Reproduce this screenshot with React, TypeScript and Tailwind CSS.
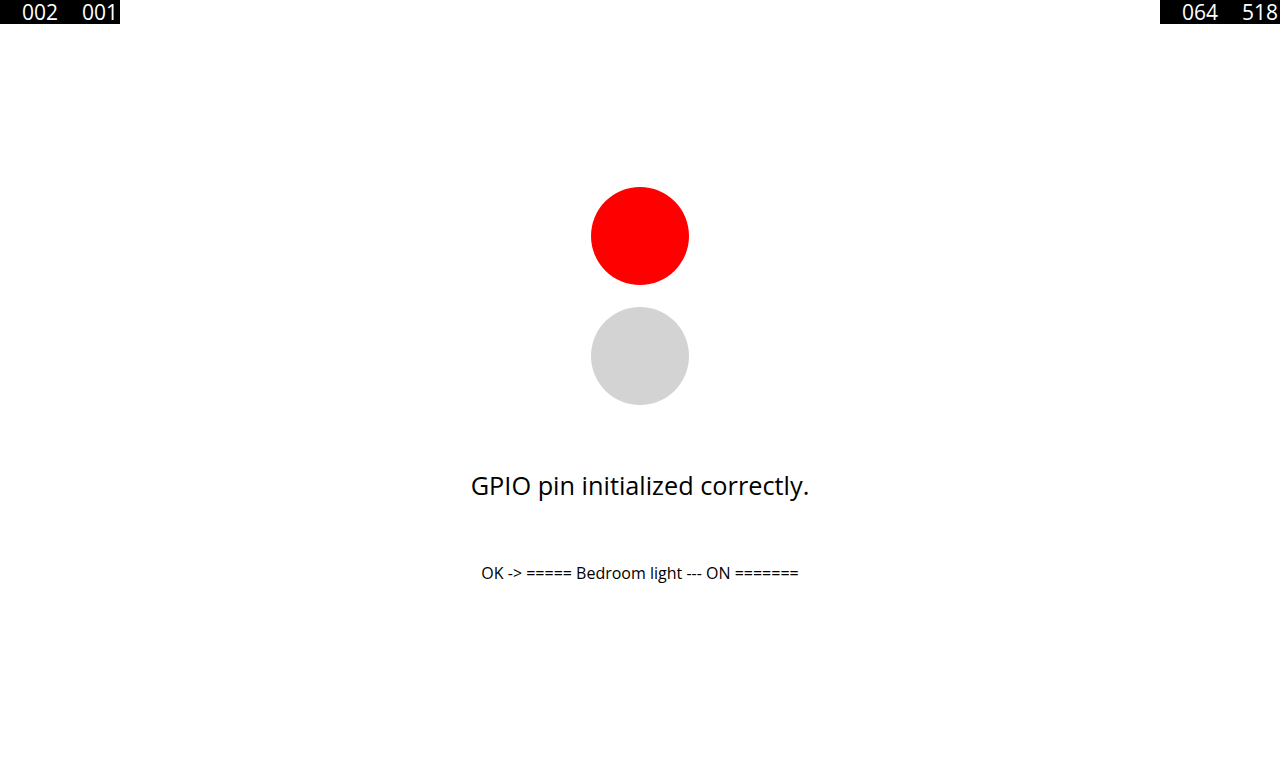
import React from "react";

export default function App() {
  const seg = { fontFamily: '"Open Sans", "Noto Sans", sans-serif' };
  return (
    <div className="relative w-[1280px] h-[768px] bg-white overflow-hidden" style={seg}>
      <div className="absolute left-0 top-0 w-[120px] h-[24px] bg-black flex items-center justify-end gap-[24px] pr-[2px] text-white text-[21px] leading-[24px] font-medium">
        <span>002</span>
        <span>001</span>
      </div>
      <div className="absolute right-0 top-0 w-[120px] h-[24px] bg-black flex items-center justify-end gap-[24px] pr-[2px] text-white text-[21px] leading-[24px] font-medium">
        <span>064</span>
        <span>518</span>
      </div>
      <div className="flex flex-col items-center pt-[187px]">
        <div className="w-[98px] h-[98px] rounded-full bg-[#ff0000]" />
        <div className="w-[98px] h-[98px] rounded-full bg-[#d3d3d3] mt-[22px]" />
        <div className="mt-[62px] text-[25.3px] leading-[36px] text-black">GPIO pin initialized correctly.</div>
        <div className="mt-[59px] text-[16px] leading-[22px] text-black">OK -&gt; ===== Bedroom light --- ON =======</div>
      </div>
    </div>
  );
}
